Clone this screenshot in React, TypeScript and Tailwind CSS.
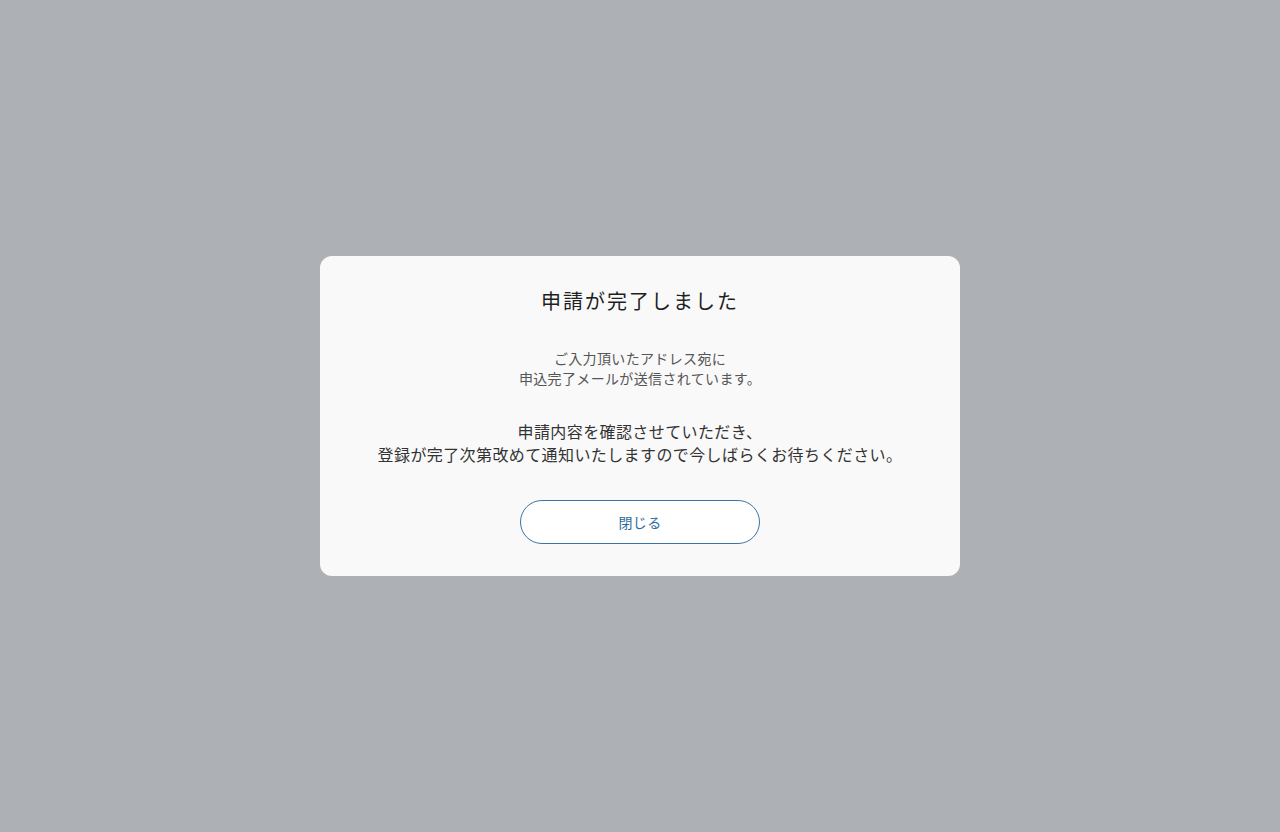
export default function App() {
  return (
    <div
      className="flex h-[832px] w-full items-center justify-center bg-[#adb0b4]"
      style={{ fontFamily: '"Noto Sans CJK JP", "Noto Sans", sans-serif' }}
    >
      <div className="flex h-[320px] w-[640px] flex-col items-center rounded-xl bg-[#f9f9f9] px-8 pt-[31px]">
        <h2 className="text-[20px] leading-[28px] tracking-[0.1em] text-[#1f1f1f]">申請が完了しました</h2>
        <p className="mt-[33px] text-center text-[14px] leading-[20px] tracking-wide text-[#555]">
          ご入力頂いたアドレス宛に
          <br />
          申込完了メールが送信されています。
        </p>
        <p className="mt-8 text-center text-[16px] leading-[23px] tracking-wide text-[#333]">
          申請内容を確認させていただき、
          <br />
          登録が完了次第改めて通知いたしますので今しばらくお待ちください。
        </p>
        <button className="mt-[34px] h-[44px] w-[240px] rounded-full border border-[#3b74a5] bg-white text-[14px] tracking-wide text-[#2f6b9d]">
          閉じる
        </button>
      </div>
    </div>
  );
}
